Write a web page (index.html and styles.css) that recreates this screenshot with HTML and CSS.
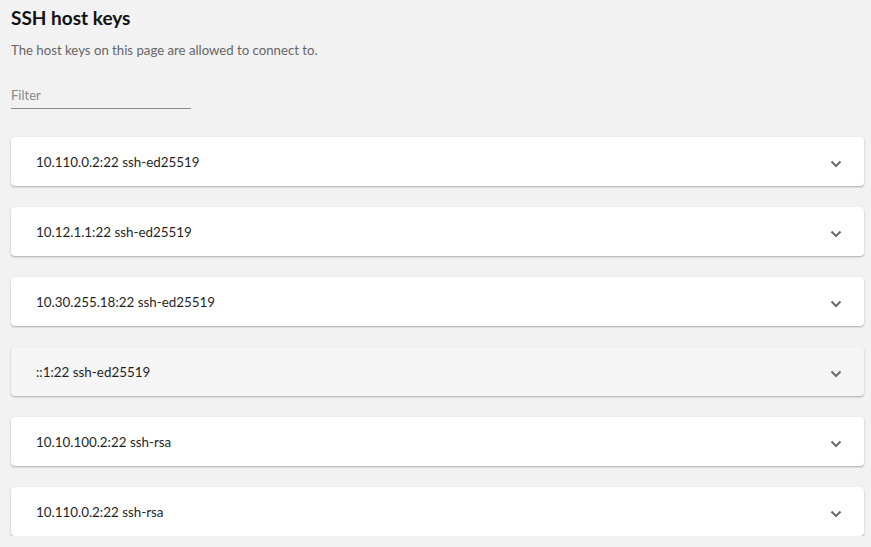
FILE: index.html
```html
<!DOCTYPE html>
<html>
<head>
<meta charset="utf-8">
<link rel="stylesheet" href="styles.css">
</head>
<body>
<main class="page">
  <h1 class="title">SSH host keys</h1>
  <p class="desc">The host keys on this page are allowed to connect to.</p>
  <div class="filter"><input class="filter-input" type="text" placeholder="Filter"></div>
  <div class="list">
    <div class="card"><span class="label">10.110.0.2:22 ssh-ed25519</span><svg class="chev" viewBox="0 0 12 8" width="12" height="8"><path d="M1.5 1.5 L6 6 L10.5 1.5" fill="none" stroke="#6b6b6b" stroke-width="2"/></svg></div>
    <div class="card"><span class="label">10.12.1.1:22 ssh-ed25519</span><svg class="chev" viewBox="0 0 12 8" width="12" height="8"><path d="M1.5 1.5 L6 6 L10.5 1.5" fill="none" stroke="#6b6b6b" stroke-width="2"/></svg></div>
    <div class="card"><span class="label">10.30.255.18:22 ssh-ed25519</span><svg class="chev" viewBox="0 0 12 8" width="12" height="8"><path d="M1.5 1.5 L6 6 L10.5 1.5" fill="none" stroke="#6b6b6b" stroke-width="2"/></svg></div>
    <div class="card card-hover"><span class="label">::1:22 ssh-ed25519</span><svg class="chev" viewBox="0 0 12 8" width="12" height="8"><path d="M1.5 1.5 L6 6 L10.5 1.5" fill="none" stroke="#6b6b6b" stroke-width="2"/></svg></div>
    <div class="card"><span class="label">10.10.100.2:22 ssh-rsa</span><svg class="chev" viewBox="0 0 12 8" width="12" height="8"><path d="M1.5 1.5 L6 6 L10.5 1.5" fill="none" stroke="#6b6b6b" stroke-width="2"/></svg></div>
    <div class="card"><span class="label">10.110.0.2:22 ssh-rsa</span><svg class="chev" viewBox="0 0 12 8" width="12" height="8"><path d="M1.5 1.5 L6 6 L10.5 1.5" fill="none" stroke="#6b6b6b" stroke-width="2"/></svg></div>
  </div>
</main>
</body>
</html>
```

FILE: styles.css
```css
html, body {
  margin: 0;
  padding: 0;
  background: #f2f2f2;
}
body {
  font-family: Lato, "Noto Sans", sans-serif;
  color: #1a1a1a;
}
.page {
  padding: 6px 7px 0 11px;
}
.title {
  margin: 0;
  font-size: 19px;
  font-weight: 700;
  line-height: 24px;
  color: #111;
}
.desc {
  margin: 11px 0 0;
  font-size: 13.2px;
  line-height: 18px;
  color: #666;
}
.filter {
  margin-top: 25px;
  width: 180px;
}
.filter-input {
  width: 100%;
  box-sizing: border-box;
  border: none;
  border-bottom: 1px solid #8a8a8a;
  background: transparent;
  padding: 0 0 4px;
  font-family: inherit;
  font-size: 13px;
  line-height: 18px;
  outline: none;
}
.filter-input::placeholder {
  color: #888;
}
.list {
  margin-top: 28px;
  display: flex;
  flex-direction: column;
  gap: 21px;
}
.card {
  height: 49px;
  background: #fff;
  border-radius: 4px;
  box-shadow: 0 1px 2px rgba(0,0,0,0.3);
  display: flex;
  align-items: center;
  justify-content: space-between;
  padding: 0 22px 0 25px;
  box-sizing: border-box;
}
.card-hover {
  background: #f5f5f5;
}
.label {
  font-size: 13.4px;
  color: #1f1f1f;
}
.chev {
  margin-top: 5px;
}
```
